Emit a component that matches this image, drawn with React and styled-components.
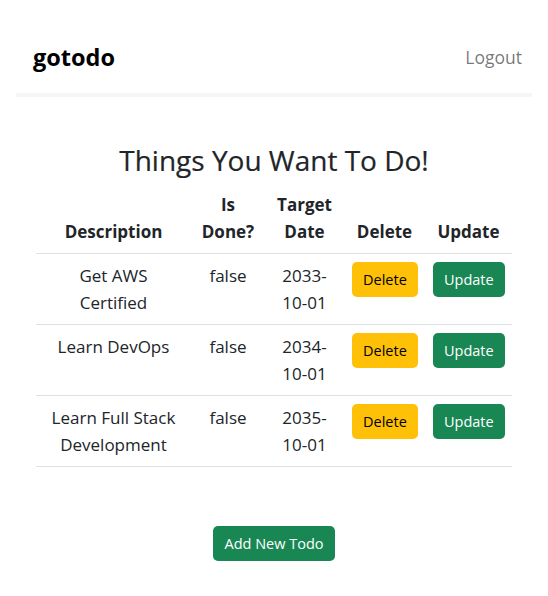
import styled, { createGlobalStyle } from "styled-components";

const GlobalStyle = createGlobalStyle`
    body {
        margin: 0;
        background: #fff;
        font-family: "Open Sans", "Noto Sans", sans-serif;
        color: #212529;
    }
`;

const Page = styled.div`
    width: 548px;
    min-height: 596px;
`;

const Nav = styled.nav`
    margin: 0 16px;
    padding: 20px 10px 0 17px;
    height: 73px;
    display: flex;
    align-items: center;
    justify-content: space-between;
    border-bottom: 4px solid #f6f6f7;
`;

const Brand = styled.span`
    font-size: 23.5px;
    font-weight: 700;
    color: #000;
`;

const NavLink = styled.a`
    font-size: 17.5px;
    color: rgba(0, 0, 0, 0.55);
    cursor: pointer;
`;

const Main = styled.main`
    padding: 45px 36px 0;
    display: flex;
    flex-direction: column;
    align-items: center;
`;

const Title = styled.h1`
    margin: 0 0 5px;
    font-size: 28px;
    font-weight: 500;
    line-height: 36px;
    color: #212529;
    -webkit-text-stroke: 0.2px #212529;
`;

const Table = styled.table`
    width: 476px;
    table-layout: fixed;
    border-collapse: collapse;
    text-align: center;
    font-size: 17px;
    line-height: 27px;
`;

const Th = styled.th`
    padding: 8px;
    vertical-align: bottom;
    font-weight: 700;
    border-bottom: 1px solid #dee2e6;
`;

const Td = styled.td`
    padding: 8px ${(p) => p.$padX || 8}px;
    vertical-align: top;
    border-bottom: 1px solid #dee2e6;
`;

const Button = styled.button`
    height: 35px;
    padding: 0 11px;
    border: none;
    border-radius: 5px;
    font-family: inherit;
    font-size: 14.5px;
    cursor: pointer;
    background: ${(p) => (p.$variant === "warning" ? "#ffc107" : "#198754")};
    color: ${(p) => (p.$variant === "warning" ? "#000" : "#fff")};
`;

const Footer = styled.div`
    margin-top: 59px;
`;

const todos = [
    { id: 1, description: "Get AWS Certified", done: false, targetDate: "2033-10-01" },
    { id: 2, description: "Learn DevOps", done: false, targetDate: "2034-10-01" },
    { id: 3, description: "Learn Full Stack Development", done: false, targetDate: "2035-10-01" },
];

const App = () => {
    return (
        <Page>
            <GlobalStyle />
            <Nav>
                <Brand>gotodo</Brand>
                <NavLink>Logout</NavLink>
            </Nav>
            <Main>
                <Title>Things You Want To Do!</Title>
                <Table>
                    <colgroup>
                        <col style={{ width: 155 }} />
                        <col style={{ width: 74 }} />
                        <col style={{ width: 79 }} />
                        <col style={{ width: 81 }} />
                        <col style={{ width: 87 }} />
                    </colgroup>
                    <thead>
                        <tr>
                            <Th>Description</Th>
                            <Th>Is Done?</Th>
                            <Th>Target Date</Th>
                            <Th>Delete</Th>
                            <Th>Update</Th>
                        </tr>
                    </thead>
                    <tbody>
                        {todos.map((todo) => (
                            <tr key={todo.id}>
                                <Td $padX={12}>{todo.description}</Td>
                                <Td>{todo.done.toString()}</Td>
                                <Td>{todo.targetDate.slice(0, 5)}<br />{todo.targetDate.slice(5)}</Td>
                                <Td><Button $variant="warning">Delete</Button></Td>
                                <Td><Button>Update</Button></Td>
                            </tr>
                        ))}
                    </tbody>
                </Table>
                <Footer>
                    <Button>Add New Todo</Button>
                </Footer>
            </Main>
        </Page>
    );
};

export default App;
